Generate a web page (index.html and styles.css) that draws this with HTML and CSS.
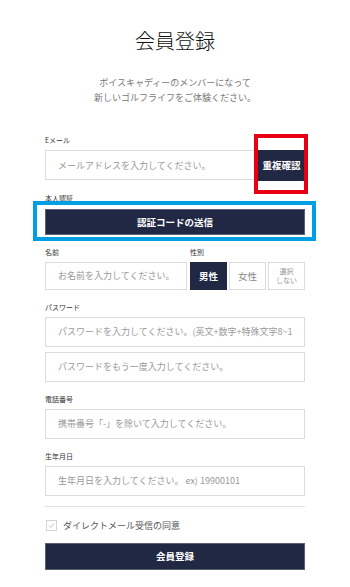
FILE: index.html
```html
<!DOCTYPE html>
<html lang="ja">
<head>
    <meta charset="UTF-8">
    <meta name="viewport" content="width=device-width, initial-scale=1.0">
    <title>会員登録</title>
    <link rel="stylesheet" href="styles.css">
</head>
<body>
    <div class="container">
        <h1 class="title">会員登録</h1>
        <p class="lead">ボイスキャディーのメンバーになって<br>新しいゴルフライフをご体験ください。</p>

        <div class="field">
            <div class="label">Eメール</div>
            <div class="row">
                <input class="input" type="text" placeholder="メールアドレスを入力してください。">
                <div class="check-wrap">
                    <button class="btn-dark check-btn">重複確認</button>
                    <span class="mark-red"></span>
                </div>
            </div>
        </div>

        <div class="field field-auth">
            <div class="label">本人認証</div>
            <div class="auth-wrap">
                <button class="btn-dark btn-wide">認証コードの送信</button>
                <span class="mark-blue"></span>
            </div>
        </div>

        <div class="field">
            <div class="row labels">
                <div class="label name-label">名前</div>
                <div class="label">性別</div>
            </div>
            <div class="row">
                <input class="input input-name" type="text" placeholder="お名前を入力してください。">
                <div class="gender">
                    <button class="g-btn active">男性</button>
                    <button class="g-btn">女性</button>
                    <button class="g-btn small">選択<br>しない</button>
                </div>
            </div>
        </div>

        <div class="field">
            <div class="label">パスワード</div>
            <input class="input" type="password" placeholder="パスワードを入力してください。(英文+数字+特殊文字8~15文字)">
            <input class="input second" type="password" placeholder="パスワードをもう一度入力してください。">
        </div>

        <div class="field">
            <div class="label">電話番号</div>
            <input class="input" type="text" placeholder="携帯番号「-」を除いて入力してください。">
        </div>

        <div class="field">
            <div class="label">生年月日</div>
            <input class="input" type="text" placeholder="生年月日を入力してください。 ex) 19900101">
        </div>

        <hr class="divider">

        <label class="agree">
            <svg width="11" height="11" viewBox="0 0 11 11">
                <rect x="0.5" y="0.5" width="10" height="10" fill="#fff" stroke="#d4d4d4"/>
                <polyline points="3,5.6 4.8,7.4 8,3.6" fill="none" stroke="#b8b8b8" stroke-width="0.9"/>
            </svg>
            <span>ダイレクトメール受信の同意</span>
        </label>

        <button class="btn-dark btn-wide submit">会員登録</button>
    </div>
</body>
</html>
```

FILE: styles.css
```css
body {
    margin: 0;
    background-color: #fff;
    font-family: "Noto Sans CJK JP", "Noto Sans", sans-serif;
    color: #333;
}
.container {
    width: 260px;
    margin: 0 auto;
    padding-top: 27px;
}
.title {
    margin: 0;
    font-size: 20px;
    line-height: 28px;
    font-weight: 300;
    text-align: center;
    color: #111;
}
.lead {
    margin: 20px 0 0;
    font-size: 9px;
    line-height: 15px;
    text-align: center;
    color: #777;
}
.field {
    margin-top: 12px;
}
.lead + .field {
    margin-top: 30px;
}
.label {
    font-size: 7px;
    line-height: 10px;
    height: 10px;
    margin-bottom: 5px;
    color: #333;
}
.row {
    display: flex;
}
.labels .name-label {
    width: 145px;
}
.input {
    display: block;
    box-sizing: border-box;
    width: 100%;
    height: 30px;
    margin: 0;
    padding: 0 12px;
    border: 1px solid #dcdcdc;
    font-family: inherit;
    font-size: 9px;
    color: #333;
    outline: none;
}
.input::placeholder {
    color: #999;
}
.row .input {
    flex: 1;
    min-width: 0;
}
.input.second {
    margin-top: 5px;
}
.btn-dark {
    background-color: #212843;
    color: #fff;
    border: 1px solid #5a5f73;
    font-family: inherit;
    font-weight: bold;
    font-size: 9.5px;
    padding: 0;
    cursor: pointer;
}
.check-wrap {
    position: relative;
    margin-left: 1px;
}
.check-btn {
    width: 47px;
    height: 31px;
    margin-top: -1px;
    border: none;
}
.mark-red {
    position: absolute;
    top: -16px;
    bottom: -13px;
    left: -4px;
    right: -3px;
    border: 4px solid #e60012;
}
.field-auth .label {
    margin-bottom: 6px;
}
.auth-wrap {
    position: relative;
}
.btn-wide {
    display: block;
    width: 100%;
    height: 26px;
}
.mark-blue {
    position: absolute;
    top: -8px;
    bottom: -6px;
    left: -12px;
    right: -11px;
    border: 4px solid #009fe3;
}
.input-name {
    height: 28px;
}
.gender {
    display: flex;
    gap: 2px;
    margin-left: 3px;
}
.g-btn {
    width: 37px;
    height: 28px;
    padding: 0;
    background-color: #fff;
    border: 1px solid #dcdcdc;
    font-family: inherit;
    font-size: 9.5px;
    color: #888;
}
.g-btn.active {
    background-color: #212843;
    border-color: #212843;
    color: #fff;
    font-weight: bold;
}
.g-btn.small {
    font-size: 7px;
    line-height: 8.5px;
    color: #999;
}
.divider {
    margin: 10px 0 0;
    border: none;
    border-top: 1px solid #e0e0e0;
}
.agree {
    display: flex;
    align-items: center;
    gap: 6px;
    margin-top: 12px;
    margin-left: 1px;
    font-size: 9px;
    color: #555;
}
.agree svg {
    display: block;
}
.submit {
    margin-top: 11px;
    height: 27px;
}
```
